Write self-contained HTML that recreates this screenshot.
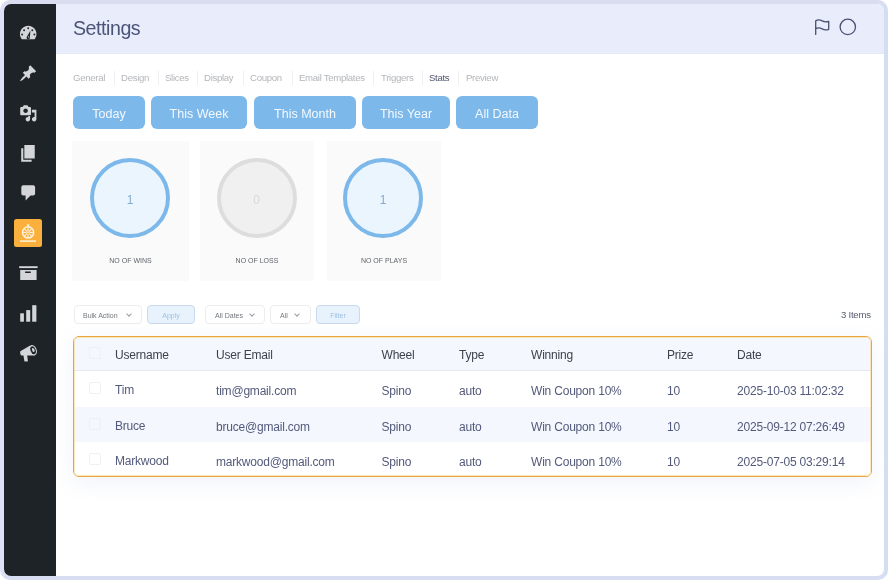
<!DOCTYPE html>
<html><head><meta charset="utf-8">
<style>
*{margin:0;padding:0;box-sizing:border-box}
html,body{width:888px;height:580px;overflow:hidden;background:#ffffff}
body{font-family:"Liberation Sans",sans-serif;position:relative}
.win{will-change:transform}
.frame{position:absolute;left:0;top:0;width:888px;height:580px;background:#dde0f6;border-radius:10px;border-style:solid;border-width:4px;border-color:#d9ddef #d3dff0 #d8ddf2 #dde0f7}
.win{position:absolute;left:4px;top:4px;width:880px;height:572px;background:#fff;border-radius:7px;overflow:hidden}
.side{position:absolute;left:0;top:0;width:52px;height:572px;background:#1d2327}
.hdr{position:absolute;left:52px;top:0;width:828px;height:50px;background:#e8ecfb;border-bottom:1px solid #e5e9f1}
.title{position:absolute;left:17px;top:12.6px;font-size:19.6px;color:#4b5578;letter-spacing:-0.45px}
.abs{position:absolute}
.tab{position:absolute;top:68px;font-size:9.6px;letter-spacing:-0.3px;color:#b3b6ba;white-space:nowrap;line-height:12px}
.sep{position:absolute;top:67px;width:1px;height:14px;background:#efeff1}
.btn{position:absolute;top:92px;height:33px;background:#7db8eb;border-radius:6px;color:#f4f9fe;font-size:12.5px;text-align:center;line-height:36px}
.card{position:absolute;top:137px;height:140px;background:#fafafa}
.circ{position:absolute;top:17px;width:80px;height:80px;border-radius:50%;border:4px solid #7cb8ea;background:#ebf5fe;text-align:center;line-height:77px;font-size:12px;color:#84acd2}
.circ.g{border-color:#dddddd;background:#f0f0f0;color:#d8d8d8}
.lbl{position:absolute;top:116px;left:0;right:0;text-align:center;font-size:7px;color:#5f646a}
.ctl{position:absolute;top:301px;height:19px;border:1px solid #ededf0;border-radius:4px;background:#fff;font-size:7px;color:#74787d;line-height:19px}
.ctl.b{background:#e7f2fd;border-color:#c9d9ee;color:#9fc3e4;text-align:center}
.chev{position:absolute;top:6px;width:4px;height:4px;border-right:1px solid #9a9ea3;border-bottom:1px solid #9a9ea3;transform:rotate(45deg)}
.tbl{position:absolute;left:69px;top:332px;width:799px;height:141px;border:1.5px solid #eaa53e;border-radius:6px;overflow:hidden;background:#fff;box-shadow:0 6px 22px rgba(110,140,210,0.10)}
.tbl::after{content:"";position:absolute;left:0;top:0;right:0;bottom:0;border:1px solid rgba(252,214,130,0.55);border-radius:5px;pointer-events:none}
.row{position:absolute;left:0;width:100%;}
.cell{position:absolute;font-size:12px;letter-spacing:-0.2px;white-space:nowrap;color:#535a7b}
.th .cell{color:#3c434a}
.cb{position:absolute;left:15px;width:12px;height:12px;border:1px solid #eef0f3;border-radius:2px;background:transparent}
</style></head><body>
<div class="frame"></div>
<div class="win">
  <div class="side">
  </div>
  <div class="hdr">
    <div class="title">Settings</div>
  </div>

  <!-- tabs -->
  <div class="tab" style="left:69px">General</div>
  <div class="sep" style="left:110px"></div>
  <div class="tab" style="left:117px">Design</div>
  <div class="sep" style="left:154px"></div>
  <div class="tab" style="left:161px">Slices</div>
  <div class="sep" style="left:193px"></div>
  <div class="tab" style="left:200px">Display</div>
  <div class="sep" style="left:239px"></div>
  <div class="tab" style="left:246px">Coupon</div>
  <div class="sep" style="left:288px"></div>
  <div class="tab" style="left:295px">Email Templates</div>
  <div class="sep" style="left:369px"></div>
  <div class="tab" style="left:377px">Triggers</div>
  <div class="sep" style="left:418px"></div>
  <div class="tab" style="left:425px;color:#50566e">Stats</div>
  <div class="sep" style="left:454px"></div>
  <div class="tab" style="left:462px">Preview</div>

  <!-- buttons -->
  <div class="btn" style="left:69px;width:72px">Today</div>
  <div class="btn" style="left:147px;width:96px">This Week</div>
  <div class="btn" style="left:250px;width:102px">This Month</div>
  <div class="btn" style="left:358px;width:88px">This Year</div>
  <div class="btn" style="left:452px;width:82px">All Data</div>

  <!-- cards -->
  <div class="card" style="left:68px;width:117px">
    <div class="circ" style="left:18px">1</div>
    <div class="lbl">NO OF WINS</div>
  </div>
  <div class="card" style="left:196px;width:114px">
    <div class="circ g" style="left:16.5px">0</div>
    <div class="lbl">NO OF LOSS</div>
  </div>
  <div class="card" style="left:323px;width:114px">
    <div class="circ" style="left:16px">1</div>
    <div class="lbl">NO OF PLAYS</div>
  </div>

  <!-- controls -->
  <div class="ctl" style="left:70px;width:68px;padding-left:8px">Bulk Action<div class="chev" style="left:51.5px"></div></div>
  <div class="ctl b" style="left:143px;width:48px">Apply</div>
  <div class="ctl" style="left:201px;width:60px;padding-left:9px">All Dates<div class="chev" style="left:43.5px"></div></div>
  <div class="ctl" style="left:266px;width:41px;padding-left:9px">All<div class="chev" style="left:24px"></div></div>
  <div class="ctl b" style="left:312px;width:44px">Filter</div>
  <div class="abs" style="left:837px;top:305px;font-size:9.6px;letter-spacing:-0.25px;color:#585e74">3 Items</div>

  <!-- table -->
  <div class="tbl">
    <div class="row th" style="top:0;height:34px;background:#f4f7fd;border-bottom:1px solid #e6e9f0">
      <div class="cb" style="top:10px"></div>
      <div class="cell" style="left:41px;top:11px">Username</div>
      <div class="cell" style="left:142px;top:11px">User Email</div>
      <div class="cell" style="left:307.5px;top:11px">Wheel</div>
      <div class="cell" style="left:385px;top:11px">Type</div>
      <div class="cell" style="left:457px;top:11px">Winning</div>
      <div class="cell" style="left:593px;top:11px">Prize</div>
      <div class="cell" style="left:663px;top:11px">Date</div>
    </div>
    <div class="row" style="top:34px;height:36px;background:#fff">
      <div class="cb" style="top:11px"></div>
      <div class="cell" style="left:41px;top:12.4px">Tim</div>
      <div class="cell" style="left:142px;top:13px">tim@gmail.com</div>
      <div class="cell" style="left:307.5px;top:13px">Spino</div>
      <div class="cell" style="left:385px;top:13px">auto</div>
      <div class="cell" style="left:457px;top:13px">Win Coupon 10%</div>
      <div class="cell" style="left:593px;top:13px">10</div>
      <div class="cell" style="left:663px;top:13px">2025-10-03 11:02:32</div>
    </div>
    <div class="row" style="top:70px;height:35px;background:#f4f7fd">
      <div class="cb" style="top:11px"></div>
      <div class="cell" style="left:41px;top:12.4px">Bruce</div>
      <div class="cell" style="left:142px;top:13px">bruce@gmail.com</div>
      <div class="cell" style="left:307.5px;top:13px">Spino</div>
      <div class="cell" style="left:385px;top:13px">auto</div>
      <div class="cell" style="left:457px;top:13px">Win Coupon 10%</div>
      <div class="cell" style="left:593px;top:13px">10</div>
      <div class="cell" style="left:663px;top:13px">2025-09-12 07:26:49</div>
    </div>
    <div class="row" style="top:105px;height:36px;background:#fff">
      <div class="cb" style="top:11px"></div>
      <div class="cell" style="left:41px;top:12.4px">Markwood</div>
      <div class="cell" style="left:142px;top:13px">markwood@gmail.com</div>
      <div class="cell" style="left:307.5px;top:13px">Spino</div>
      <div class="cell" style="left:385px;top:13px">auto</div>
      <div class="cell" style="left:457px;top:13px">Win Coupon 10%</div>
      <div class="cell" style="left:593px;top:13px">10</div>
      <div class="cell" style="left:663px;top:13px">2025-07-05 03:29:14</div>
    </div>
  </div>
</div>
<svg class="icons" width="888" height="580" viewBox="0 0 888 580" style="position:absolute;left:0;top:0">
 <g fill="#d3d5d8">
  <!-- gauge -->
  <g transform="translate(17.9,22.7) scale(1.03)">
   <path d="M3.76 16h12.48c1.1-1.37 1.76-3.11 1.76-5 0-4.42-3.58-8-8-8s-8 3.58-8 8c0 1.89.66 3.63 1.76 5z"/>
  </g>
  <g fill="#1d2327">
   <circle cx="28.2" cy="28.2" r="0.95"/>
   <circle cx="24.1" cy="30.2" r="0.95"/>
   <circle cx="32.3" cy="30.2" r="0.95"/>
   <circle cx="22.1" cy="34.5" r="0.95"/>
   <circle cx="34.4" cy="34.5" r="0.95"/>
   <path d="M30.4,30.6 L27.2,36.2 A1.7,1.7 0 1 0 29.9,37.3 Z"/>
  </g>
  <circle cx="28.6" cy="36.9" r="0.6" fill="#d3d5d8"/>
  <!-- pin -->
  <g transform="translate(19.0,64.2) scale(0.92)">
   <path d="M10.44 3.02l1.82-1.82 6.36 6.35-1.83 1.820c-1.05-.68-2.48-.57-3.41.36l-.75.75c-.92.93-1.040 2.35-.35 3.41l-1.83 1.82-2.41-2.41-2.8 2.79c-.42.42-3.38 2.71-3.8 2.29s1.86-3.39 2.28-3.81l2.79-2.79L4.1 9.36l1.83-1.82c1.05.69 2.48.57 3.41-.36l.75-.75c.93-.92 1.04-2.35.35-3.41z"/>
  </g>
  <!-- media -->
  <g transform="translate(19.3,104.4) scale(0.9)">
   <path fill-rule="evenodd" d="M13 11V4c0-.55-.45-1-1-1h-1.67L9 1H5L3.67 3H2c-.55 0-1 .45-1 1v7c0 .55.45 1 1 1h10c.55 0 1-.45 1-1zM7 4.5c1.38 0 2.5 1.12 2.5 2.5S8.38 9.5 7 9.5 4.5 8.38 4.5 7 5.62 4.5 7 4.5z"/>
   <path d="M14 6h5v10.5c0 1.38-1.12 2.5-2.5 2.5S14 17.88 14 16.5s1.12-2.5 2.5-2.5c.17 0 .34.02.5.05V9h-3V6zm-4 8.05V13h2v3.5c0 1.38-1.12 2.5-2.5 2.5S7 17.88 7 16.5 8.12 14 9.5 14c.17 0 .34.02.5.05z"/>
  </g>
  <!-- pages -->
  <g transform="translate(18.1,143) scale(1.04)">
   <path d="M6 15V2h10v13H6zm-1 1h8v2H3V5h2v11z"/>
  </g>
  <!-- comments -->
  <path d="M23.3,185.2 h9.8 a2,2 0 0 1 2,2 v6.3 a2,2 0 0 1 -2,2 h-2.6 l-4.9,5.1 v-5.1 h-2.3 a2,2 0 0 1 -2,-2 v-6.3 a2,2 0 0 1 2,-2z"/>
  <!-- archive -->
  <rect x="19.2" y="266.2" width="18.4" height="1.9"/>
  <path fill-rule="evenodd" d="M20.2,269.9 h16.4 v10.2 h-16.4z M25.1,271.5 h5.6 v1.4 h-5.6z"/>
  <!-- chart -->
  <rect x="20.2" y="313.3" width="3.7" height="8.4"/>
  <rect x="26.2" y="310.1" width="4" height="11.6"/>
  <rect x="32.2" y="305.2" width="4.2" height="16.5"/>
  <!-- megaphone -->
  <path d="M20.3,351.2 L30.2,345.6 L34.2,355.4 L21.2,355.4 C20.1,354.6 19.9,352 20.3,351.2 Z"/>
  <path d="M23.4,355 L27.1,355 L27.9,361.1 C27.5,361.7 25,361.8 24.4,361.3 Z"/>
  <ellipse cx="33" cy="350.3" rx="3.7" ry="5.4" transform="rotate(-22 33 350.3)"/>
  <ellipse cx="33.1" cy="350.2" rx="2.5" ry="4.1" transform="rotate(-22 33.1 350.2)" fill="#1d2327"/>
  <ellipse cx="33.3" cy="350" rx="1.2" ry="2.1" transform="rotate(-22 33.3 350)"/>
 </g>
  <!-- orange wheel -->
 <rect x="14" y="219" width="28" height="28" rx="2.5" fill="#fbb03d"/>
 <g stroke="#fff3da" fill="none">
  <circle cx="28.1" cy="232.4" r="5.6" stroke-width="1.5"/>
  <g stroke-width="1.1">
   <line x1="28.1" y1="227" x2="28.1" y2="237.8"/>
   <line x1="22.7" y1="232.4" x2="33.5" y2="232.4"/>
   <line x1="24.3" y1="228.6" x2="31.9" y2="236.2"/>
   <line x1="31.9" y1="228.6" x2="24.3" y2="236.2"/>
  </g>
  <line x1="20" y1="241.1" x2="36" y2="241.1" stroke-width="1.5"/>
 </g>
 <path d="M26.5,224.5 L29.7,224.5 L28.1,227.4Z" fill="#fff3da"/>
 <circle cx="28.1" cy="232.4" r="1.5" fill="#fbb03d"/>
 <circle cx="28.1" cy="232.4" r="0.8" fill="#fff3da"/>
<g fill="none" stroke="#4a5170" stroke-width="1.3" stroke-linejoin="round" stroke-linecap="round">
  <path d="M815.7,34.4 V20.9 C818,19.3 820.5,19.9 822.2,20.9 C824,21.9 826.5,22 828.7,21.3 V29.3 C826.5,30.1 824,29.9 822.2,28.9 C820.5,27.9 818,27.5 815.7,28.6"/>
  <circle cx="847.8" cy="26.9" r="7.7"/>
 </g>
</svg>
</body></html>
